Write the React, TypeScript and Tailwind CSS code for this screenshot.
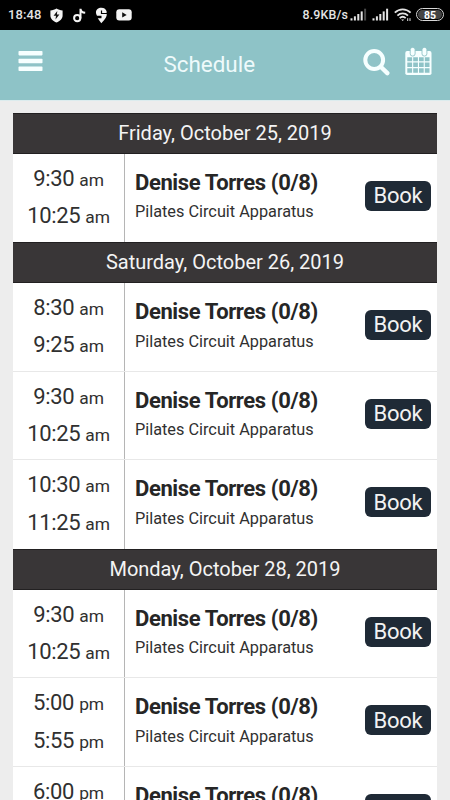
import React from 'react'

interface Slot {
  start: string
  startPeriod: string
  end: string
  endPeriod: string
  trainer: string
  title: string
}

interface Day {
  date: string
  slots: Slot[]
}

function slot(start: string, end: string, period: string): Slot {
  return { start, startPeriod: period, end, endPeriod: period, trainer: 'Denise Torres (0/8)', title: 'Pilates Circuit Apparatus' }
}

const days: Day[] = [
  { date: 'Friday, October 25, 2019', slots: [slot('9:30', '10:25', 'am')] },
  {
    date: 'Saturday, October 26, 2019',
    slots: [slot('8:30', '9:25', 'am'), slot('9:30', '10:25', 'am'), slot('10:30', '11:25', 'am')],
  },
  {
    date: 'Monday, October 28, 2019',
    slots: [slot('9:30', '10:25', 'am'), slot('5:00', '5:55', 'pm'), slot('6:00', '6:55', 'pm')],
  },
]

function SignalIcon({ full = false }: { full?: boolean }) {
  return (
    <svg width="17" height="13" viewBox="0 0 17 13" fill="#e4e4e4">
      <rect x="0.5" y="10.3" width="2" height="2.2" />
      <rect x="3.9" y="8.3" width="2" height="4.2" />
      <rect x="7.3" y="6" width="2" height="6.5" />
      <rect x="10.7" y="3.4" width="2" height="9.1" />
      <rect x="14.1" y="0.7" width="2" height="11.8" fill={full ? '#e4e4e4' : '#4a4a4a'} />
    </svg>
  )
}

function StatusBar() {
  return (
    <div className="flex h-[30px] shrink-0 items-center bg-black pr-[6px] pl-2 text-[#e4e4e4]">
      <span className="w-[42px] text-[13px] font-medium tracking-[0.1px]">18:48</span>
      <svg width="13" height="15" viewBox="0 0 13 15">
        <path d="M6.5 0.5C8.3 1.7 10.3 2.3 12.6 2.5V7.4C12.6 10.7 10 13 6.5 14.4C3 13 0.4 10.7 0.4 7.4V2.5C2.7 2.3 4.7 1.7 6.5 0.5Z" fill="#f4f4f4" />
        <path d="M7.3 2.9L3.6 7.7H6L5.5 11.5L9.4 6.6H6.9Z" fill="#111" />
      </svg>
      <svg className="ml-[10px]" width="13" height="15" viewBox="0 0 13 15" fill="none" stroke="#f4f4f4" strokeWidth="2">
        <circle cx="4.2" cy="10.2" r="3.1" />
        <path d="M7.5 10.5V0.8C7.8 3.2 9.4 4.6 12.2 4.8" />
      </svg>
      <svg className="ml-[9px]" width="13" height="17" viewBox="0 0 13 17">
        <path d="M6.3 0.8C9.2 0.8 11.3 2.4 11.8 4.9L11.4 6H7.1V3.5H5.9V7H11.7C12.1 10.2 8.7 13.6 6.3 16.2C5.1 14.7 3.8 13 2.8 11.3H6.5V8.8H2C-0.7 4.5 2.2 0.8 6.3 0.8Z" fill="#f4f4f4" />
      </svg>
      <svg className="ml-[8px]" width="16" height="12" viewBox="0 0 16 12">
        <rect x="0.3" y="0.3" width="15.4" height="11.2" rx="3" fill="#f4f4f4" />
        <path d="M6.2 3.2V8.6L10.7 5.9Z" fill="#111" />
      </svg>
      <div className="ml-auto flex items-center">
        <span className="mr-[2px] text-[12.4px] font-medium tracking-[0.15px]">8.9KB/s</span>
        <SignalIcon />
        <span className="w-[5px]" />
        <SignalIcon full />
        <svg className="ml-[5px]" width="18" height="14" viewBox="0 0 18 14" fill="none" stroke="#e4e4e4" strokeWidth="1.8">
          <path d="M0.8 4.7C5.4 0.3 12 0.3 16.6 4.7" />
          <path d="M3.4 7.6C6.5 4.7 10.9 4.7 14 7.6" />
          <path d="M5.7 10.1C7.6 8.3 9.8 8.3 11.7 10.1" />
          <path d="M7.2 11.4L8.7 13L10.2 11.4Z" fill="#e4e4e4" stroke="none" />
          <path d="M13.7 10.2V13M16 10.2V13" strokeWidth="1" />
        </svg>
        <span className="ml-[4px] flex h-[13px] w-[28px] items-center justify-center rounded-full border-[1.5px] border-[#d8d8d8] bg-black p-px">
          <span className="flex h-full w-full items-center justify-center rounded-full bg-[#444] pt-px text-[10.5px] font-bold text-white">85</span>
        </span>
      </div>
    </div>
  )
}

function AppHeader() {
  return (
    <header className="flex h-[70px] shrink-0 items-center bg-[#8ec3c7] pr-[18px] pl-[18px] text-[#f6ffff]">
      <button className="mb-[9px]" aria-label="Menu">
        <svg width="25" height="20" viewBox="0 0 25 20" fill="currentColor">
          <rect x="0.5" y="0" width="24" height="4.4" rx="0.8" />
          <rect x="0.5" y="7.8" width="24" height="4.4" rx="0.8" />
          <rect x="0.5" y="15.6" width="24" height="4.4" rx="0.8" />
        </svg>
      </button>
      <h1 className="mb-[2px] ml-[120.5px] text-[22.4px] leading-[26px] text-[#eefafb]">Schedule</h1>
      <button className="mb-[6px] ml-auto" aria-label="Search">
        <svg width="27" height="27" viewBox="0 0 27 27" fill="none" stroke="currentColor">
          <circle cx="11.2" cy="11" r="8.9" strokeWidth="4" />
          <path d="M18 18L24.3 24.1" strokeWidth="4.4" strokeLinecap="round" />
        </svg>
      </button>
      <button className="mb-[8px] ml-[15px]" aria-label="Calendar">
        <svg width="27" height="29" viewBox="0 0 27 29">
          <rect x="0.3" y="4.1" width="26.2" height="24" rx="1.8" fill="currentColor" />
          <g fill="currentColor" stroke="#8ec3c7" strokeWidth="0.9">
            <rect x="5.2" y="0.4" width="4.9" height="8.6" rx="2.2" />
            <rect x="17" y="0.4" width="4.9" height="8.6" rx="2.2" />
          </g>
          <g fill="#8ec3c7">
            <path d="M2.3 10.2H7.1V14.3H2.3ZM8.2 10.2H12.9V14.3H8.2ZM14 10.2H18.7V14.3H14ZM19.8 10.2H24.5V14.3H19.8Z" />
            <path d="M2.3 15.5H7.1V20.1H2.3ZM8.2 15.5H12.9V20.1H8.2ZM14 15.5H18.7V20.1H14ZM19.8 15.5H24.5V20.1H19.8Z" />
            <path d="M2.3 21.3H7.1V25.8H2.3ZM8.2 21.3H12.9V25.8H8.2ZM14 21.3H18.7V25.8H14ZM19.8 21.3H24.5V25.8H19.8Z" />
          </g>
        </svg>
      </button>
    </header>
  )
}

function Time({ value, period }: { value: string; period: string }) {
  return (
    <p className="h-[37.4px] text-[22px] leading-[37px] tracking-[-0.35px] whitespace-nowrap">
      {value} <span className="text-[17.4px] leading-none tracking-[-0.1px]">{period}</span>
    </p>
  )
}

function SlotRow({ item }: { item: Slot }) {
  return (
    <div className="flex h-[88.7px] border-b border-[#e8e8e8] bg-white text-[#303030] last:border-b-0">
      <div className="w-[112px] shrink-0 border-r border-[#b5b5b5] pt-[6px] text-center">
        <Time value={item.start} period={item.startPeriod} />
        <Time value={item.end} period={item.endPeriod} />
      </div>
      <div className="flex-1 pt-[15px] pl-[10px]">
        <p className="text-[22px] leading-[28px] font-bold tracking-[-0.38px] whitespace-nowrap text-[#262626]">{item.trainer}</p>
        <p className="mt-[3.6px] text-[16.3px] leading-[24px] whitespace-nowrap">{item.title}</p>
      </div>
      <button className="mt-[27px] mr-[6px] h-[30px] w-[66px] rounded-[6px] bg-[#1f2a36] text-[22px] leading-[29px] tracking-[-0.2px] text-[#f2f2f2]">
        Book
      </button>
    </div>
  )
}

export default function App() {
  return (
    <div className="flex h-[800px] w-[450px] flex-col overflow-hidden bg-[#ededed] font-['Roboto',sans-serif]">
      <StatusBar />
      <AppHeader />
      <main className="min-h-0 flex-1 overflow-hidden border-t border-[#dcecee] px-[13px] pt-[11.9px]">
        {days.map(day => (
          <section key={day.date}>
            <h2 className="h-[40.7px] border-y border-[#222021] bg-[#393637] text-center text-[20px] leading-[38px] text-[#f4f4f4]">
              {day.date}
            </h2>
            {day.slots.map(item => (
              <SlotRow key={item.start} item={item} />
            ))}
          </section>
        ))}
      </main>
    </div>
  )
}
